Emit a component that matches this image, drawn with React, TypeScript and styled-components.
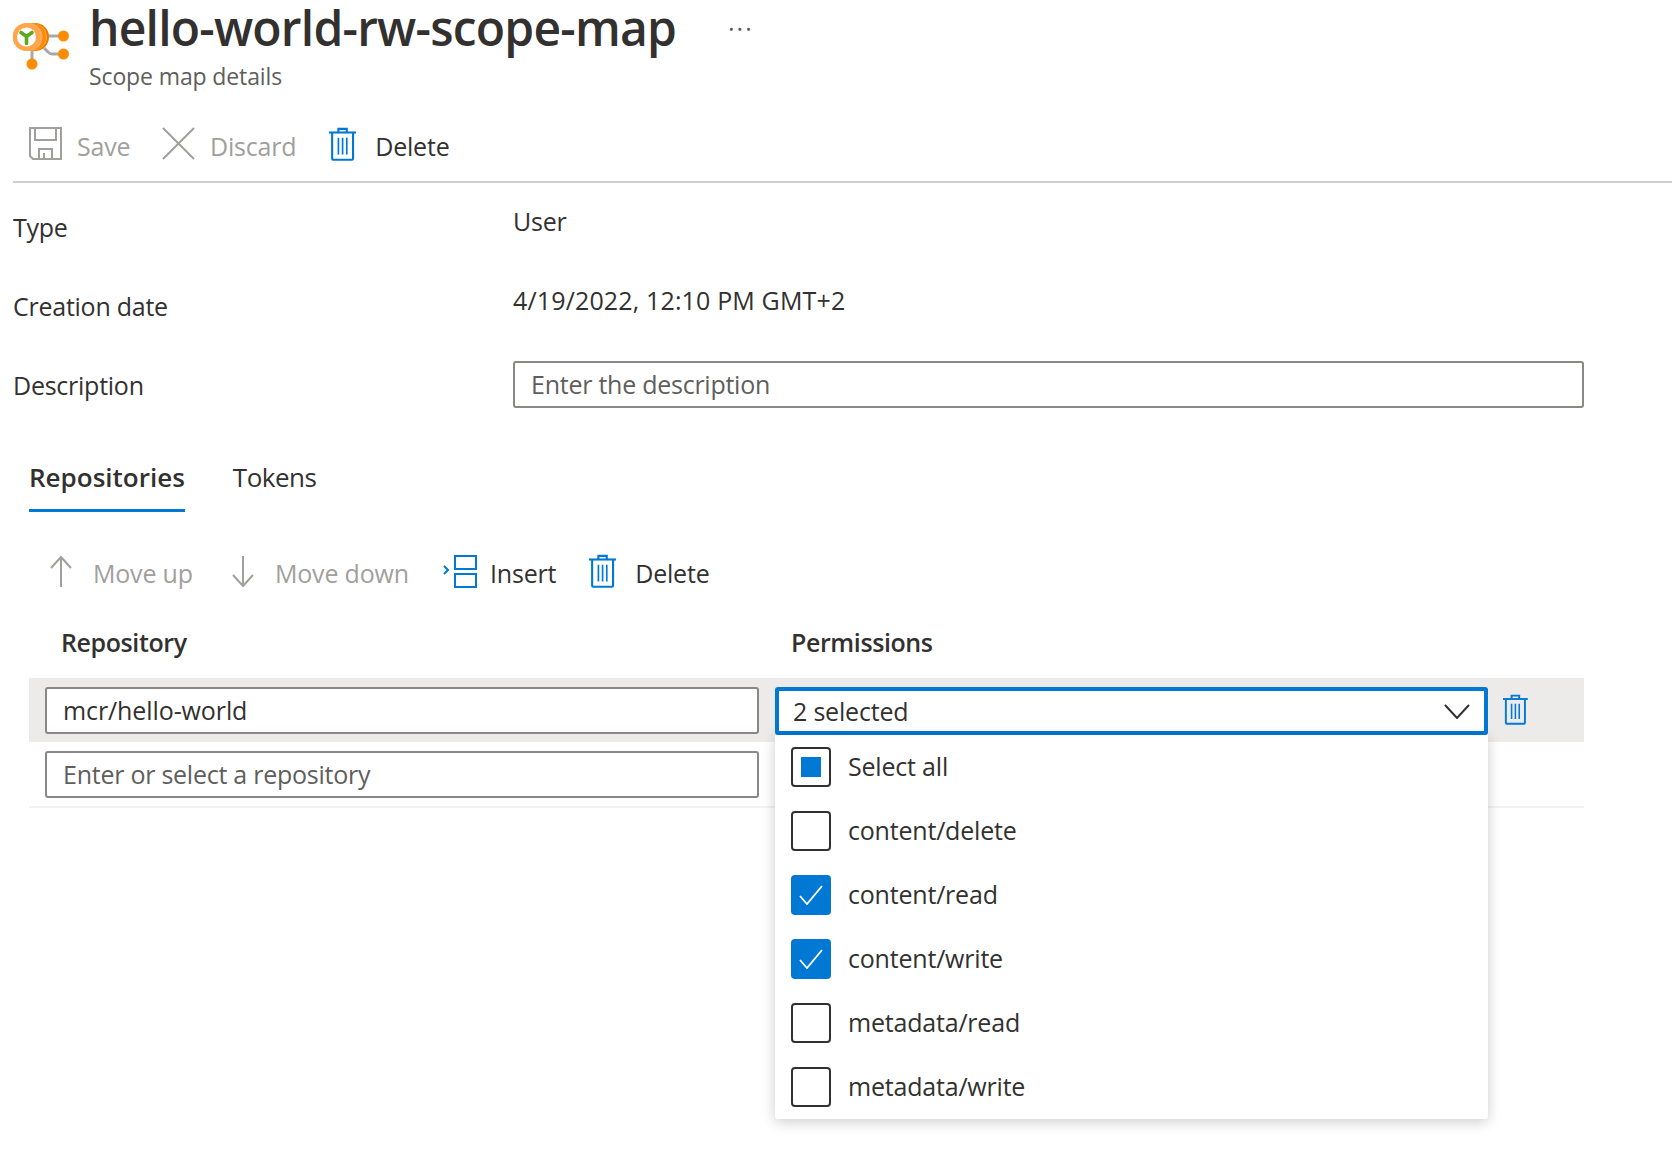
import React from 'react';
import styled, { createGlobalStyle } from 'styled-components';

const GlobalStyle = createGlobalStyle`
    html, body {
        margin: 0;
        padding: 0;
        background: #fff;
        font-family: "Open Sans", "Noto Sans", sans-serif;
        color: #323130;
    }
`;

const Page = styled.div`
    width: 1672px;
    height: 1166px;
    overflow: hidden;
    padding-left: 13px;
    box-sizing: border-box;
`;

const Header = styled.header`
    display: flex;
    height: 106px;
`;

const LogoSlot = styled.div`
    width: 76px;
    padding-top: 21px;
    flex: none;
    svg { display: block; }
`;

const TitleBlock = styled.div`
    width: 600px;
    flex: none;
`;

const Title = styled.h1`
    margin: 0;
    font-size: 48px;
    line-height: 56px;
    font-weight: 600;
    letter-spacing: -0.78px;
    white-space: nowrap;
`;

const Subtitle = styled.div`
    margin-top: 4px;
    font-size: 23px;
    line-height: 32px;
    letter-spacing: -0.12px;
    color: #605e5c;
`;

const More = styled.div`
    margin-left: 39px;
    padding-top: 12px;
    font-size: 25px;
    line-height: 32px;
    letter-spacing: 2px;
    color: #605e5c;
`;

const CommandLabel = styled.span`
    padding-top: 3px;
`;

const Toolbar = styled.div`
    display: flex;
    align-items: center;
    height: 75px;
    padding-left: 16px;
    border-bottom: 2px solid #d2d0ce;
    ${CommandLabel} { padding-top: 5px; }
`;

const Command = styled.div<{ $disabled?: boolean; $gap: number; $width: number }>`
    display: flex;
    align-items: center;
    width: ${p => p.$width}px;
    flex: none;
    gap: ${p => p.$gap}px;
    font-size: 25px;
    letter-spacing: -0.2px;
    white-space: nowrap;
    color: ${p => (p.$disabled ? '#a19f9d' : '#323130')};
    svg { flex: none; display: block; }
`;

const FormRow = styled.div<{ $height: number }>`
    display: grid;
    grid-template-columns: 500px 1071px;
    height: ${p => p.$height}px;
`;

const FieldLabel = styled.div`
    font-size: 25px;
    line-height: 34px;
    letter-spacing: -0.25px;
    padding-top: 27px;
`;

const FieldValue = styled.div<{ $wide?: boolean }>`
    font-size: 25px;
    line-height: 34px;
    letter-spacing: ${p => (p.$wide ? '0.15px' : '-0.25px')};
    padding-top: 21px;
`;

const TextBox = styled.div<{ $placeholder?: boolean }>`
    height: 47px;
    box-sizing: border-box;
    border: 2px solid #8a8886;
    border-radius: 3px;
    background: #fff;
    padding: 0 0 2px 16px;
    display: flex;
    align-items: center;
    font-size: 25px;
    letter-spacing: ${p => (p.$placeholder ? '-0.25px' : '-0.1px')};
    color: ${p => (p.$placeholder ? '#605e5c' : '#323130')};
`;

const DescriptionBox = styled(TextBox)`
    margin-top: 20px;
`;

const Tabs = styled.div`
    display: flex;
    gap: 48px;
    margin: 18px 0 0 16px;
    height: 74px;
`;

const Tab = styled.div<{ $active?: boolean }>`
    height: 74px;
    box-sizing: border-box;
    padding-top: 21px;
    font-size: 26px;
    line-height: 36px;
    letter-spacing: ${p => (p.$active ? '0' : '-0.5px')};
    font-weight: ${p => (p.$active ? 600 : 400)};
    border-bottom: 3px solid ${p => (p.$active ? '#0078d4' : 'transparent')};
`;

const Commands = styled.div`
    display: flex;
    align-items: center;
    height: 62px;
    margin-top: 28px;
    padding-left: 36px;
`;

const ColumnHeads = styled.div`
    display: grid;
    grid-template-columns: 730px 700px;
    box-sizing: border-box;
    padding: 4px 0 0 48px;
    height: 76px;
    align-items: center;
    font-size: 25px;
    font-weight: 600;
    letter-spacing: -0.4px;
`;

const Grid = styled.div`
    position: relative;
    width: 1555px;
    margin-left: 16px;
`;

const RepoRow = styled.div<{ $highlight?: boolean }>`
    display: grid;
    grid-template-columns: 714px 713px 56px;
    column-gap: 16px;
    align-items: start;
    box-sizing: border-box;
    height: 64px;
    padding: 9px 0 0 16px;
    background: ${p => (p.$highlight ? '#edebe9' : 'transparent')};
`;

const LastRow = styled(RepoRow)`
    height: 66px;
    border-bottom: 2px solid #f3f2f1;
`;

const SelectBox = styled.div`
    height: 48px;
    box-sizing: border-box;
    border: 4px solid #0078d4;
    border-radius: 3px;
    background: #fff;
    padding: 0 14px;
    display: flex;
    align-items: center;
    justify-content: space-between;
    font-size: 25px;
    letter-spacing: -0.2px;
`;

const RowDelete = styled.div`
    margin: 7px 0 0 -1px;
    svg { display: block; }
`;

const Dropdown = styled.div`
    position: absolute;
    top: 57px;
    left: 746px;
    width: 713px;
    height: 384px;
    background: #fff;
    border-radius: 0 0 3px 3px;
    box-shadow: 0 3px 14px rgba(0, 0, 0, 0.2);
`;

const Option = styled.div`
    display: flex;
    align-items: center;
    gap: 17px;
    height: 64px;
    padding-left: 16px;
    font-size: 25px;
    letter-spacing: -0.2px;
`;

const OptionLabel = styled.span`
    padding-bottom: 2px;
`;

const Check = styled.div<{ $checked?: boolean }>`
    width: 40px;
    height: 40px;
    flex: none;
    box-sizing: border-box;
    border-radius: 4px;
    border: 2px solid ${p => (p.$checked ? '#0078d4' : '#323130')};
    background: ${p => (p.$checked ? '#0078d4' : '#fff')};
    display: flex;
    align-items: center;
    justify-content: center;
    svg { display: block; }
`;

const Indeterminate = styled.div`
    width: 20px;
    height: 20px;
    background: #0078d4;
`;

const TrashIcon = ({ size = 34 }: { size?: number }) => (
    <svg width={size * 0.8} height={size} viewBox="0 0 26 32" fill="none" stroke="#0078d4" strokeWidth="2">
        <path d="M0 5h26" />
        <path d="M9 5V1.5h8V5" />
        <path d="M3 5v25q0 1 1 1h18q1 0 1-1V5" />
        <path d="M9 10v16M13 10v16M17 10v16" strokeWidth="1.6" />
    </svg>
);

const SaveIcon = () => (
    <svg width="33" height="33" viewBox="0 0 33 33" fill="none" stroke="#a19f9d" strokeWidth="2">
        <path d="M1 1h31v31H4l-3-3z" />
        <path d="M6 1v12h21V1" />
        <path d="M10 32V22h13v10M15 26v6" />
    </svg>
);

const CloseIcon = () => (
    <svg width="33" height="33" viewBox="0 0 33 33" fill="none" stroke="#a19f9d" strokeWidth="2">
        <path d="M1 1l31 31M32 1L1 32" />
    </svg>
);

const ArrowUp = () => (
    <svg width="24" height="33" viewBox="0 0 24 33" fill="none" stroke="#a19f9d" strokeWidth="2">
        <path d="M12 32V2M2 13L12 2l10 11" />
    </svg>
);

const ArrowDown = () => (
    <svg width="24" height="33" viewBox="0 0 24 33" fill="none" stroke="#a19f9d" strokeWidth="2">
        <path d="M12 1v30M2 20l10 11 10-11" />
    </svg>
);

const InsertIcon = () => (
    <svg width="34" height="33" viewBox="0 0 34 33" fill="none" stroke="#0078d4" strokeWidth="2">
        <rect x="12" y="1" width="21" height="13" />
        <rect x="12" y="19" width="21" height="13" />
        <path d="M1 11l4 4-4 4" />
    </svg>
);

const Chevron = () => (
    <svg width="26" height="15" viewBox="0 0 26 15" fill="none" stroke="#323130" strokeWidth="2">
        <path d="M1 1l12 13L25 1" />
    </svg>
);

const CheckMark = () => (
    <svg width="24" height="20" viewBox="0 0 24 20" fill="none" stroke="#fff" strokeWidth="1.8">
        <path d="M1 11l7 8L23 1" />
    </svg>
);

const ScopeMapLogo = () => (
    <svg width="60" height="50" viewBox="0 0 60 50" fill="none">
        <path d="M34 15h14" stroke="#a8a8a8" strokeWidth="3" />
        <path d="M31 27l4 4q2 2 4 2h10" stroke="#a8a8a8" strokeWidth="3" />
        <path d="M19 28v14" stroke="#a8a8a8" strokeWidth="3" />
        <circle cx="22" cy="16" r="14" fill="#e87900" />
        <circle cx="20.5" cy="16" r="13.5" fill="#ffa64d" />
        <circle cx="19" cy="16" r="14" fill="#ff8c00" />
        <circle cx="15.5" cy="16" r="14" fill="#ffb066" />
        <circle cx="13.5" cy="16" r="14" fill="#ffa64d" />
        <circle cx="13.5" cy="16" r="9.5" fill="#fff" />
        <path d="M8 11.5l5.5 4 5.5-4M13.5 15.5v7" stroke="#5ea81f" strokeWidth="3.6" strokeLinecap="round" />
        <circle cx="50.5" cy="15" r="5.5" fill="#ff8c00" />
        <circle cx="50.5" cy="33" r="5.5" fill="#ff8c00" />
        <circle cx="19" cy="43" r="5.5" fill="#ff8c00" />
    </svg>
);

const options = [
    { label: 'Select all', state: 'mixed' },
    { label: 'content/delete', state: 'off' },
    { label: 'content/read', state: 'on' },
    { label: 'content/write', state: 'on' },
    { label: 'metadata/read', state: 'off' },
    { label: 'metadata/write', state: 'off' },
];

export default function App(): JSX.Element {
    return (<Page>
        <GlobalStyle />
        <Header>
            <LogoSlot><ScopeMapLogo /></LogoSlot>
            <TitleBlock>
                <Title>hello-world-rw-scope-map</Title>
                <Subtitle>Scope map details</Subtitle>
            </TitleBlock>
            <More>···</More>
        </Header>
        <Toolbar>
            <Command $disabled $gap={15} $width={133}><SaveIcon /><CommandLabel>Save</CommandLabel></Command>
            <Command $disabled $gap={15} $width={167}><CloseIcon /><CommandLabel>Discard</CommandLabel></Command>
            <Command $gap={19} $width={140}><TrashIcon /><CommandLabel>Delete</CommandLabel></Command>
        </Toolbar>
        <FormRow $height={79}>
            <FieldLabel>Type</FieldLabel>
            <FieldValue>User</FieldValue>
        </FormRow>
        <FormRow $height={79}>
            <FieldLabel>Creation date</FieldLabel>
            <FieldValue $wide>4/19/2022, 12:10 PM GMT+2</FieldValue>
        </FormRow>
        <FormRow $height={79}>
            <FieldLabel>Description</FieldLabel>
            <DescriptionBox $placeholder>Enter the description</DescriptionBox>
        </FormRow>
        <Tabs>
            <Tab $active>Repositories</Tab>
            <Tab>Tokens</Tab>
        </Tabs>
        <Commands>
            <Command $disabled $gap={20} $width={182}><ArrowUp /><CommandLabel>Move up</CommandLabel></Command>
            <Command $disabled $gap={20} $width={212}><ArrowDown /><CommandLabel>Move down</CommandLabel></Command>
            <Command $gap={13} $width={146}><InsertIcon /><CommandLabel>Insert</CommandLabel></Command>
            <Command $gap={19} $width={140}><TrashIcon /><CommandLabel>Delete</CommandLabel></Command>
        </Commands>
        <ColumnHeads>
            <div>Repository</div>
            <div>Permissions</div>
        </ColumnHeads>
        <Grid>
            <RepoRow $highlight>
                <TextBox>mcr/hello-world</TextBox>
                <SelectBox>2 selected<Chevron /></SelectBox>
                <RowDelete><TrashIcon size={31} /></RowDelete>
            </RepoRow>
            <LastRow>
                <TextBox $placeholder>Enter or select a repository</TextBox>
            </LastRow>
            <Dropdown>
                {options.map(option => (
                    <Option key={option.label}>
                        <Check $checked={option.state === 'on'}>
                            {option.state === 'on' && <CheckMark />}
                            {option.state === 'mixed' && <Indeterminate />}
                        </Check>
                        <OptionLabel>{option.label}</OptionLabel>
                    </Option>
                ))}
            </Dropdown>
        </Grid>
    </Page>)
}
